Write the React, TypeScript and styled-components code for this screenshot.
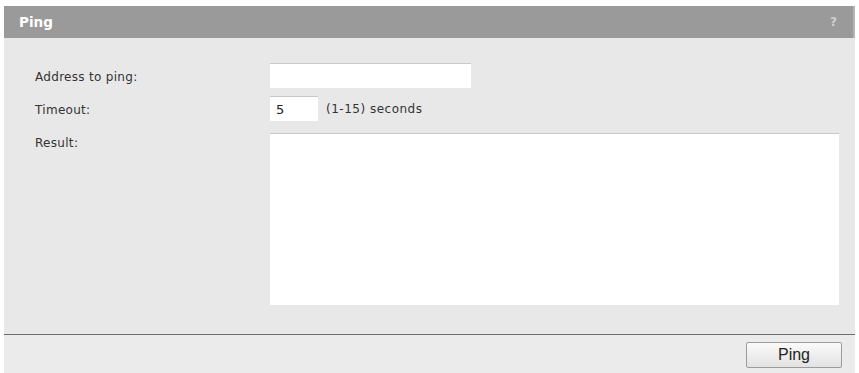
import React from "react";
import styled, { createGlobalStyle } from "styled-components";

const GlobalStyle = createGlobalStyle`
  html, body { margin: 0; padding: 0; background: #ffffff; }
  body { font-family: "DejaVu Sans", Verdana, sans-serif; }
`;

const Page = styled.div`
  width: 859px;
  height: 373px;
  padding: 6px 4px 0 4px;
  box-sizing: border-box;
`;

const Panel = styled.div`
  display: flex;
  flex-direction: column;
  height: 100%;
  background: #e8e8e8;
`;

const Header = styled.div`
  display: flex;
  align-items: center;
  justify-content: space-between;
  height: 32px;
  padding: 0 16px 0 15px;
  background: #9a9a9a;
  color: #ffffff;
  border-right: 2px solid #b5b5b5;
`;

const Title = styled.span`
  font-weight: bold;
  font-size: 13.5px;
`;

const Help = styled.span`
  font-size: 12px;
  font-weight: bold;
  color: #d0d0d0;
`;

const Body = styled.div`
  flex: 1;
  display: grid;
  grid-template-columns: 235px 1fr;
  grid-auto-rows: min-content;
  row-gap: 8px;
  padding: 25px 16px 0 31px;
  border-bottom: 1px solid #6e6e6e;
`;

const Label = styled.label`
  height: 25px;
  box-sizing: border-box;
  padding-top: 2px;
  font-size: 12px;
  letter-spacing: 0.3px;
  color: #333333;
  line-height: 25px;
`;

const Field = styled.div`
  display: flex;
  align-items: center;
  gap: 8px;
  font-size: 12px;
  letter-spacing: 0.5px;
  color: #333333;
`;

const TextInput = styled.input<{ $w: number }>`
  width: ${(p) => p.$w}px;
  height: 25px;
  box-sizing: border-box;
  border: none;
  border-top: 1px solid #c8c8c8;
  background: #ffffff;
  padding: 0 6px;
  font-family: "DejaVu Sans", Verdana, sans-serif;
  font-size: 13px;
  color: #222;
  outline: none;
`;

const ResultBox = styled.textarea`
  width: 569px;
  height: 172px;
  box-sizing: border-box;
  border: none;
  border-top: 1px solid #c8c8c8;
  background: #ffffff;
  resize: none;
  outline: none;
  margin-top: 4px;
`;

const Footer = styled.div`
  height: 38px;
  display: flex;
  align-items: center;
  justify-content: flex-end;
  padding: 0 13px 0 0;
  background: #ebebeb;
`;

const Button = styled.button`
  width: 96px;
  height: 26px;
  margin-top: 2px;
  border: 1px solid #9c9c9c;
  border-radius: 2px;
  background: linear-gradient(#fafafa, #e2e2e2);
  font-family: "Liberation Sans", Arial, sans-serif;
  font-size: 16px;
  color: #222;
`;

export default function App() {
  return (
    <>
      <GlobalStyle />
      <Page>
        <Panel>
          <Header>
            <Title>Ping</Title>
            <Help>?</Help>
          </Header>
          <Body>
            <Label>Address to ping:</Label>
            <Field>
              <TextInput $w={201} />
            </Field>
            <Label>Timeout:</Label>
            <Field>
              <TextInput $w={48} defaultValue="5" />
              <span>(1-15) seconds</span>
            </Field>
            <Label>Result:</Label>
            <Field>
              <ResultBox />
            </Field>
          </Body>
          <Footer>
            <Button>Ping</Button>
          </Footer>
        </Panel>
      </Page>
    </>
  );
}
